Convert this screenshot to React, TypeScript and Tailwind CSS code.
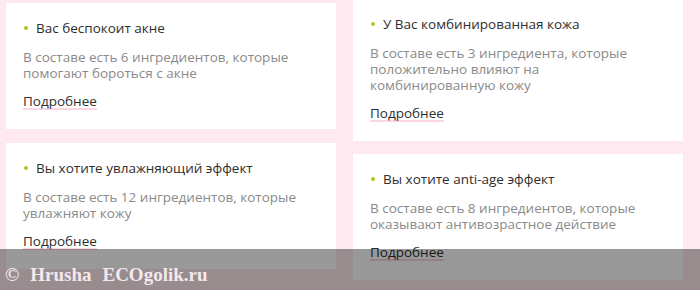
const cards = [
  {
    title: "Вас беспокоит акне",
    lines: ["В составе есть 6 ингредиентов, которые", "помогают бороться с акне"],
  },
  {
    title: "Вы хотите увлажняющий эффект",
    lines: ["В составе есть 12 ингредиентов, которые", "увлажняют кожу"],
  },
  {
    title: "У Вас комбинированная кожа",
    lines: ["В составе есть 3 ингредиента, которые", "положительно влияют на", "комбинированную кожу"],
  },
  {
    title: "Вы хотите anti-age эффект",
    lines: ["В составе есть 8 ингредиентов, которые", "оказывают антивозрастное действие"],
  },
];

const Card = ({ title, lines }: { title: string; lines: string[] }) => {
  return (
    <div className="bg-white pl-[17px] pr-4 pt-[15px] pb-[19px]">
      <div className="flex items-center h-5 text-[13.5px] text-[#2e2e2e]">
        <span className="w-[4px] h-[4px] rounded-full bg-[#a6cc1f] mr-[8px] ml-[1px]"></span>
        {title}
      </div>
      <div className="mt-[11px] text-[13.5px] leading-[16px] text-[#8a8a8a]">
        {lines.map((l, i) => (
          <div key={i} className="whitespace-nowrap">{l}</div>
        ))}
      </div>
      <div className="mt-[13px] flex h-4">
        <a className="block text-[13.5px] leading-[14px] text-[#2e2e2e] border-b-2 border-[#fbd6e0]">
          Подробнее
        </a>
      </div>
    </div>
  );
};

export default function App() {
  return (
    <div
      className="relative w-[700px] h-[290px] overflow-hidden bg-[#fde9ef]"
      style={{ fontFamily: '"Open Sans", "Noto Sans", sans-serif' }}
    >
      <div className="flex gap-[17px] pl-[6px]">
        <div className="w-[330px] flex flex-col gap-[14px] pt-[3px]">
          <Card {...cards[0]} />
          <Card {...cards[1]} />
        </div>
        <div className="w-[330px] flex flex-col gap-[13px] -mt-px">
          <Card {...cards[2]} />
          <Card {...cards[3]} />
        </div>
      </div>

      <div
        className="absolute left-0 right-0 top-[249px] bottom-0 bg-black/40 flex items-center gap-[11px] pl-[5px] pt-[11px] text-[19px] font-bold text-[#f3e8ec]"
        style={{ fontFamily: '"Liberation Serif", serif' }}
      >
        <span>©</span>
        <span>Hrusha</span>
        <span>ECOgolik.ru</span>
      </div>
    </div>
  );
}
